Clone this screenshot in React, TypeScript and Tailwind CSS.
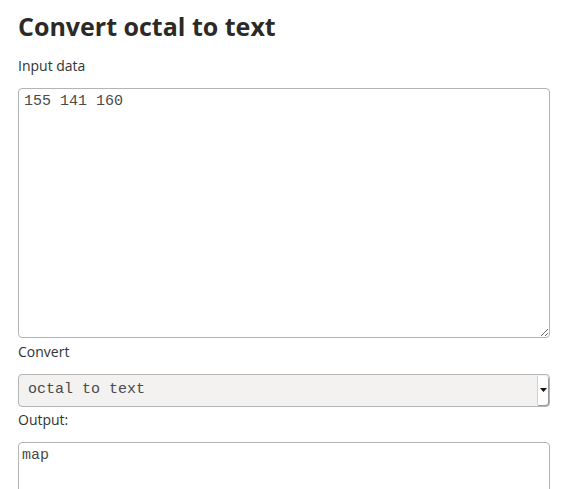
export default function App() {
  return (
    <div className="min-h-screen bg-white px-[18px] pt-[6px] font-['Open_Sans',sans-serif] text-[#333]">
      <h1 className="text-[25px] font-bold leading-[40px] text-[#2b2a26]">Convert octal to text</h1>
      <div className="mt-[10px] text-[14px] leading-[20px]">Input data</div>
      <textarea
        className="mt-[12px] block h-[250px] w-[532px] resize rounded-[4px] border border-[#b4b4b4] bg-white px-[5px] py-[4px] font-['Liberation_Mono',monospace] text-[15px] leading-[18px] text-[#4a4a4a] outline-none"
        defaultValue="155 141 160"
      />
      <div className="mt-[4px] text-[14px] leading-[20px]">Convert</div>
      <div className="mt-[12px] flex h-[33px] w-[532px] items-stretch rounded-[4px] border border-[#b4b4b4] bg-[#f3f2f1]">
        <div className="flex flex-1 items-center px-[9px] font-['Liberation_Mono',monospace] text-[15px] text-[#4a4a4a]">octal to text</div>
        <div className="my-[1px] mr-[1px] flex w-[11px] items-center justify-center rounded-r-[3px] border-l border-[#d0d0d0] bg-white shadow-[1px_1px_0_#999]">
          <svg width="7" height="5" viewBox="0 0 7 5"><path d="M0 0h7L3.5 4z" fill="#111" /></svg>
        </div>
      </div>
      <div className="mt-[3px] text-[14px] leading-[20px]">Output:</div>
      <textarea
        className="mt-[12px] block h-[120px] w-[532px] resize rounded-[4px] border border-[#b4b4b4] bg-white px-[3px] py-[4px] font-['Liberation_Mono',monospace] text-[15px] leading-[18px] text-[#4a4a4a] outline-none"
        defaultValue="map"
      />
    </div>
  );
}
